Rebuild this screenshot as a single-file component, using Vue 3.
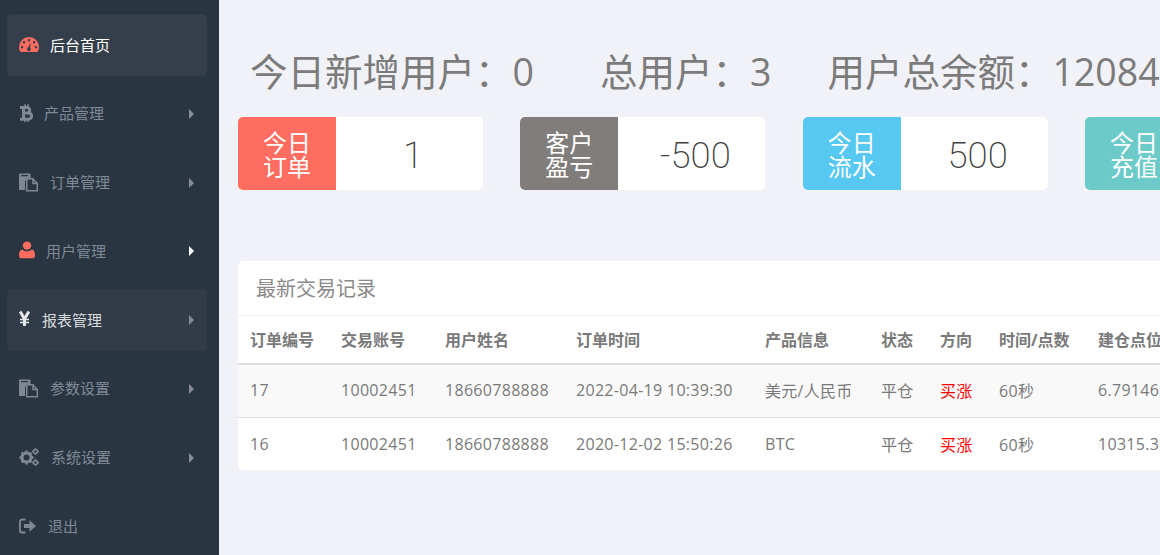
<script setup>
const menu = [
  { name: '后台首页', icon: 'gauge', w: 20, state: 'active', arrow: false },
  { name: '产品管理', icon: 'btc', w: 14, arrow: true },
  { name: '订单管理', icon: 'files', w: 19, arrow: true },
  { name: '用户管理', icon: 'user', w: 16, arrow: true, bright: true },
  { name: '报表管理', icon: 'yen', w: 11, state: 'open', arrow: true },
  { name: '参数设置', icon: 'files', w: 19, arrow: true },
  { name: '系统设置', icon: 'cogs', w: 20, arrow: true },
  { name: '退出', icon: 'out', w: 17, arrow: false }
]
const stats = [
  { label: '今日新增用户：', value: '0' },
  { label: '总用户：', value: '3' },
  { label: '用户总余额：', value: '12084.35' }
]
const cards = [
  { top: '今日', bottom: '订单', value: '1', tone: 'red' },
  { top: '客户', bottom: '盈亏', value: '-500', tone: 'gray' },
  { top: '今日', bottom: '流水', value: '500', tone: 'blue' },
  { top: '今日', bottom: '充值', value: '0', tone: 'teal' }
]
const heads = ['订单编号', '交易账号', '用户姓名', '订单时间', '产品信息', '状态', '方向', '时间/点数', '建仓点位']
const rows = [
  ['17', '10002451', '18660788888', '2022-04-19 10:39:30', '美元/人民币', '平仓', '买涨', '60秒', '6.79146'],
  ['16', '10002451', '18660788888', '2020-12-02 15:50:26', 'BTC', '平仓', '买涨', '60秒', '10315.36']
]
</script>

<template>
  <div class="page">
    <aside class="side">
      <a v-for="m in menu" :key="m.name" class="item" :class="m.state">
        <svg class="ico" :class="m.icon" :width="m.w" height="20" :viewBox="`0 0 ${m.w} 20`">
          <template v-if="m.icon === 'gauge'">
            <path fill-rule="evenodd" d="M10 3a10 10 0 0 0-10 10c0 1.700.4 3.200 1.200 4.500l.5.5h16.600l.5-.5A10 10 0 0 0 20 13 10 10 0 0 0 10 3zM10 5a1.300 1.300 0 1 1 0 2.600A1.300 1.300 0 0 1 10 5zM5 7a1.300 1.300 0 1 1 0 2.600A1.300 1.300 0 0 1 5 7zM15 7a1.300 1.300 0 1 1 0 2.600A1.300 1.300 0 0 1 15 7zM3 12a1.300 1.300 0 1 1 0 2.600A1.300 1.300 0 0 1 3 12zM17 12a1.300 1.300 0 1 1 0 2.600A1.300 1.300 0 0 1 17 12zM11.800 8.500l-.8 5.200a1.900 1.900 0 1 1-2.200 0z"/>
          </template>
          <template v-else-if="m.icon === 'btc'">
            <path fill="none" stroke="currentColor" stroke-width="3" d="M4.500 4.500v11.700M1 4.500h7a2.600 2.600 0 0 1 0 5.500H4.500M4.500 10h5a3.100 3.100 0 0 1 0 6.200H1"/>
            <path fill="none" stroke="currentColor" stroke-width="1.600" d="M6 1.300v3M9 1.300v3M6 16v3M9 16v3"/>
          </template>
          <template v-else-if="m.icon === 'files'">
            <path d="M0 2.500A1 1 0 0 1 1 1.500h9.500a1 1 0 0 1 1 1v3.500H9L6 9v9H1a1 1 0 0 1-1-1z"/>
            <rect x="2" y="3" width="7" height="1.300" fill="#2a3542"/>
            <path fill="none" stroke="currentColor" stroke-width="1.500" d="M7.700 8.500v10.200h10.600V11.500h-4.300V6.800h-4.500zM13.800 6.800l4.500 4.700"/>
          </template>
          <template v-else-if="m.icon === 'user'">
            <circle cx="8" cy="5.600" r="4.200"/>
            <path d="M3.200 9.500C4.500 10.700 6 11.300 8 11.300s3.500-.6 4.800-1.800c2 .2 3.200 2.200 3.200 6 0 1.900-1.100 2.800-2.600 2.800H2.600C1.100 18.300 0 17.400 0 15.500c0-3.800 1.200-5.800 3.200-6z"/>
          </template>
          <template v-else-if="m.icon === 'yen'">
            <path fill="none" stroke="currentColor" stroke-width="3" d="M1.200 1.500l4.300 7.500 4.300-7.500M5.500 9v7"/>
            <path fill="none" stroke="currentColor" stroke-width="1.600" d="M1 9.500h9M1 12.500h9"/>
          </template>
          <template v-else-if="m.icon === 'cogs'">
            <circle cx="7.500" cy="10.500" r="4.500" fill="none" stroke="currentColor" stroke-width="3"/>
            <path fill="none" stroke="currentColor" stroke-width="2.400" d="M7.500 3.500v3M7.500 14.500v3M.5 10.500h3M11.500 10.500h3M2.600 5.600l2.100 2.100M10.300 13.300l2.100 2.100M2.600 15.400l2.100-2.100M10.300 7.700l2.100-2.100"/>
            <circle cx="16.500" cy="4.500" r="2" fill="none" stroke="currentColor" stroke-width="1.600"/>
            <circle cx="16.500" cy="15.500" r="2" fill="none" stroke="currentColor" stroke-width="1.600"/>
            <path fill="none" stroke="currentColor" stroke-width="1.300" d="M16.500 1v1.200M16.500 6.800V8M13 4.500h1.200M18.800 4.500H20M16.500 12v1.200M16.500 17.800V19M13 15.500h1.200M18.800 15.500H20"/>
          </template>
          <template v-else>
            <path fill="none" stroke="currentColor" stroke-width="1.800" d="M6.500 3.500H3.200A2.300 2.300 0 0 0 .9 5.800v8.400a2.300 2.300 0 0 0 2.300 2.300h3.300"/>
            <path d="M5 8h5.500V4.200L17 10l-6.500 5.800V12H5z"/>
          </template>
        </svg>
        <span class="name">{{ m.name }}</span>
        <i v-if="m.arrow" class="arrow" :class="{ lit: m.bright }"></i>
      </a>
    </aside>

    <main class="main">
      <div class="stats">
        <span v-for="s in stats" :key="s.label" class="stat">{{ s.label }}{{ s.value }}</span>
      </div>

      <div class="cards">
        <div v-for="c in cards" :key="c.bottom" class="card">
          <div class="tag" :class="c.tone"><span>{{ c.top }}</span><span>{{ c.bottom }}</span></div>
          <div class="val">{{ c.value }}</div>
        </div>
      </div>

      <section class="panel">
        <h2 class="title">最新交易记录</h2>
        <table class="grid">
          <thead>
            <tr><th v-for="h in heads" :key="h">{{ h }}</th></tr>
          </thead>
          <tbody>
            <tr v-for="r in rows" :key="r[0]">
              <td v-for="(v, i) in r" :key="i" :class="{ up: i === 6 }">{{ v }}</td>
            </tr>
          </tbody>
        </table>
      </section>
    </main>
  </div>
</template>

<style>
html, body { margin: 0; height: 100%; overflow: hidden; }
</style>

<style scoped>
.page {
  display: flex;
  width: 1160px;
  height: 555px;
  overflow: hidden;
  background: #f1f2f7;
  font-family: "Open Sans", "Noto Sans CJK SC", sans-serif;
}
.side {
  flex: 0 0 219px;
  box-sizing: border-box;
  padding: 14px 12px 0 7px;
  display: flex;
  flex-direction: column;
  gap: 6.75px;
  background: #2a3542;
  color: #7f8a96;
}
.item {
  flex: 0 0 62px;
  display: flex;
  align-items: center;
  box-sizing: border-box;
  padding: 0 13px 0 12px;
  border-radius: 5px;
  font-size: 15px;
  color: #7f8a96;
}
.item.active { background: #353f4b; color: #fff; }
.item.open { background: #323c48; color: #d9dcdf; }
.name { margin-bottom: 2px; }
.ico { flex: none; fill: currentColor; color: #808992; margin: 0 12px 2px 0; }
.ico.gauge, .ico.user { color: #ff6c60; margin-right: 11px; }
.ico.btc { margin-right: 11px; }
.ico.yen { margin-bottom: 1px; }
.ico.out { margin-bottom: 0; }
.item.open .ico { color: #e4e6e8; }
.arrow {
  margin-left: auto;
  width: 0;
  height: 0;
  border-left: 5px solid #868d94;
  border-top: 5px solid transparent;
  border-bottom: 5px solid transparent;
}
.arrow.lit { border-left-color: #fff; }

.main { flex: 1; min-width: 0; overflow: hidden; }
.stats {
  display: flex;
  gap: 56px;
  height: 117px;
  box-sizing: border-box;
  padding: 46px 0 0 31px;
  white-space: nowrap;
  font-size: 37.5px;
  line-height: 52px;
  color: #7b7b7b;
}
.stat:first-child { margin-right: 10px; }
.cards {
  display: flex;
  gap: 37.33px;
  width: 1200px;
  margin-left: 19px;
}
.card {
  flex: 0 0 245px;
  height: 73px;
  display: flex;
  background: #fff;
  border-radius: 5px;
  overflow: hidden;
}
.tag {
  flex: 0 0 98px;
  box-sizing: border-box;
  padding-top: 2px;
  display: flex;
  flex-direction: column;
  align-items: center;
  justify-content: center;
  font-size: 24px;
  line-height: 24px;
  color: #fff;
}
.tag.red { background: #ff6c60; }
.tag.gray { background: #807d7a; }
.tag.blue { background: #57c8f2; }
.tag.teal { background: #6ccac9; }
.val {
  flex: 1;
  box-sizing: border-box;
  padding-left: 7px;
  text-align: center;
  font-family: Roboto, "Open Sans", sans-serif;
  font-size: 36.5px;
  font-weight: 200;
  line-height: 78px;
  color: #404040;
}
.panel {
  width: 1300px;
  margin: 71px 0 0 19px;
  background: #fff;
  border-radius: 5px;
  overflow: hidden;
}
.title {
  margin: 0;
  height: 55px;
  box-sizing: border-box;
  padding-left: 18px;
  border-bottom: 1px solid #f0f0f0;
  font-size: 20px;
  font-weight: 400;
  line-height: 56px;
  color: #8a8a8a;
}
.grid {
  width: 100%;
  table-layout: fixed;
  border-collapse: separate;
  border-spacing: 0;
  font-size: 16px;
  color: #797979;
}
.grid th, .grid td {
  box-sizing: border-box;
  padding: 0 0 0 12px;
  text-align: left;
  white-space: nowrap;
  overflow: hidden;
}
.grid th { height: 49px; padding-bottom: 2px; font-weight: 700; border-bottom: 2px solid #ddd; }
.grid td { height: 52px; letter-spacing: .3px; }
.grid tbody tr:first-child td { height: 53px; padding-bottom: 3px; background: #f9f9f9; border-bottom: 1px solid #ddd; }
.grid .up { color: #f00; }
.grid th:nth-child(1) { width: 91px; }
.grid th:nth-child(2) { width: 104px; }
.grid th:nth-child(3) { width: 131px; }
.grid th:nth-child(4) { width: 189px; }
.grid th:nth-child(5) { width: 116px; }
.grid th:nth-child(6) { width: 59px; }
.grid th:nth-child(7) { width: 59px; }
.grid th:nth-child(8) { width: 99px; }
</style>
